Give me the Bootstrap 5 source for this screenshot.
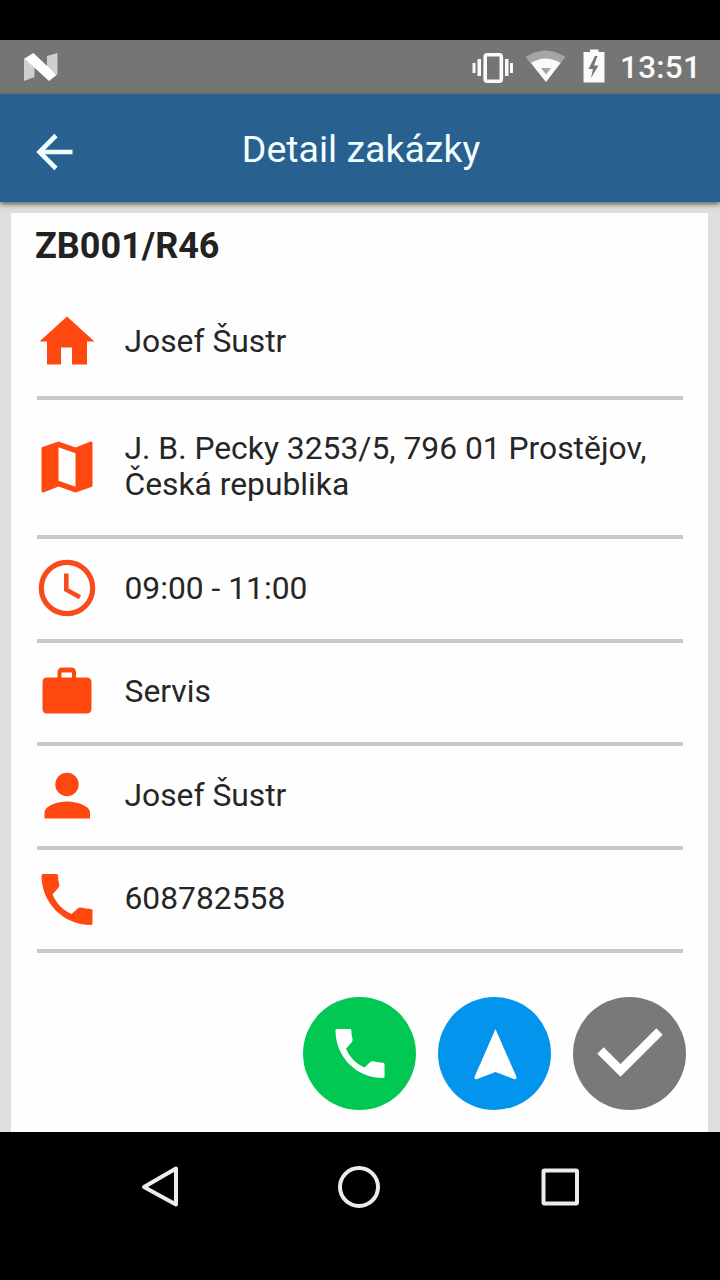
<!DOCTYPE html>
<html lang="cs">
<head>
<meta charset="utf-8">
<meta name="viewport" content="width=device-width, initial-scale=1">
<title>Detail zakázky</title>
<link href="https://cdn.jsdelivr.net/npm/bootstrap@5.3.0/dist/css/bootstrap.min.css" rel="stylesheet">
<style>
body { font-family: Roboto, "Noto Sans", sans-serif; color: #262626; background: #000; overflow: hidden; }
svg { display: block; flex: none; }
.screen { width: 720px; height: 1280px; padding-top: 40px; }
.status-bar { height: 54px; background: #757573; padding: 0 19px 0 20px; }
.status-time { font-size: 31.5px; font-weight: 500; line-height: 52px; padding-top: 2px; color: #fafafa; letter-spacing: .2px; margin-left: 10px; }
.app-bar { height: 108px; background: #28618f; box-shadow: 0 2px 5px rgba(60, 45, 35, .75); z-index: 1; padding: 0 24px; color: #f2ffff; }
.app-title { font-size: 37.5px; font-weight: 400; line-height: 106px; padding-top: 1px; margin: 0; }
.app-bar-end { width: 58px; }
.page-area { background: #dedede; padding: 11px 12px 0 11px; height: 930px; }
.order-card { border: 0; border-radius: 0; height: 919px; background: #fefefe; color: inherit; }
.order-number { font-size: 36px; font-weight: 700; line-height: 40px; margin: 0; padding: 13px 0 21px 24px; color: #222; }
.detail-list { margin: 0 25px 0 26px; border-radius: 0; }
.detail-list > .detail-row { background: none; color: inherit; border: 0 solid #c8c8c8; border-bottom-width: 4px; border-radius: 0; padding: 0 0 2px; height: 103px; font-size: 31.8px; line-height: 36px; }
.detail-list > .detail-row:nth-child(odd) { height: 104px; }
.detail-list > .detail-row:first-child { height: 113px; padding-bottom: 0; }
.detail-list > .detail-row:nth-child(2) { height: 139px; }
.detail-row span { padding-bottom: 1px; }
.detail-icon { width: 68px; height: 68px; margin: 0 24px 0 -4.5px; fill: #ff4810; }
.fab-row { gap: 22px; padding: 44px 22px 0 0; }
.fab { width: 113px; height: 113px; padding: 0; border: 0; }
.fab-call { background: #00c853; }
.fab-navigate { background: #0394ee; }
.fab-done { background: #7a7879; }
.system-nav { height: 110px; padding-left: 135px; gap: 152px; fill: none; stroke: #ececec; stroke-width: 4; }
</style>
</head>
<body>
<svg width="0" height="0" class="position-absolute" aria-hidden="true">
  <symbol id="handset" viewBox="0 0 52 52"><path d="M2 .5h13.500q1.500 0 1.500 1.500 0 5 1.300 9 .4 1.500-.6 2.700l-6.200 7.300c4.500 9.500 9.500 15 19 19.500l6.500-5.800q1.300-1 3-.6 4 1.200 10 1.400 1.500.1 1.500 1.500V50q0 1.500-1.500 1.500C22 51.500.5 29 .5 2Q.5.500 2 .5z"/></symbol>
</svg>
<div class="screen d-flex flex-column">
  <div class="status-bar d-flex align-items-center">
    <svg width="40" height="54" viewBox="20 40 40 54">
      <path fill="#d0cece" d="M24 58v23l10.500-4V66zM47 56l10.500-3v22L47 70z"/>
      <path fill="#fff" d="M24.500 58.500 33.500 53 56.500 75 49 81z"/>
    </svg>
    <svg class="ms-auto" width="140" height="54" viewBox="470 40 140 54">
      <rect x="485.200" y="54.700" width="16.100" height="26.600" rx="2" fill="none" stroke="#fafafa" stroke-width="3.600"/>
      <path fill="#fafafa" d="M477.500 59h3.500v17h-3.500zM472.500 63h3v10h-3zM505 59h3.500v17H505zM510 63h3v10h-3z"/>
      <path fill="#a5a5a4" d="M525.500 57q20-13 40 0L546 82z"/>
      <path fill="#fafafa" fill-rule="evenodd" d="M531 63q14.500-9 29.500 0L546 82zM541 68l5 6.500 5-6.500z"/>
      <path fill="#fafafa" d="M583.500 52h6.500v-2.500h8.500V52h6v30.500h-21z"/>
      <path fill="#757573" d="m595 56-6.500 13h4.500l-2 9 7.500-12.500H594l3.500-9.500z"/>
    </svg>
    <span class="status-time">13:51</span>
  </div>
  <header class="app-bar d-flex align-items-center position-relative">
    <svg width="60" height="60" viewBox="24 118 60 60" fill="none" stroke="#f2ffff" stroke-width="4.600"><path d="M72.500 152H40M56 135.500 39.500 152 56 168.500"/></svg>
    <h1 class="app-title flex-fill text-center">Detail zakázky</h1>
    <span class="app-bar-end"></span>
  </header>
  <main class="page-area">
    <section class="card order-card">
      <h2 class="order-number">ZB001/R46</h2>
      <ul class="list-group detail-list">
        <li class="list-group-item detail-row d-flex align-items-center">
          <svg class="detail-icon" viewBox="0 0 68 68"><path d="M28 56.500V39.500H39V56.500H54V33.500H61.500L34 8.500 6.500 33.500H14V56.500z"/></svg>
          <span>Josef Šustr</span>
        </li>
        <li class="list-group-item detail-row d-flex align-items-center">
          <svg class="detail-icon" viewBox="0 0 24 24"><path d="M20.500 3l-.16.03L15 5.100 9 3 3.360 4.900c-.21.07-.36.25-.36.48V20.500c0 .28.22.5.5.5l.16-.03L9 18.900l6 2.100 5.640-1.900c.21-.07.36-.25.36-.48V3.500c0-.28-.22-.5-.5-.5zM15 19l-6-2.110V5l6 2.110V19z"/></svg>
          <span>J. B. Pecky 3253/5, 796 01 Prostějov,<br>Česká republika</span>
        </li>
        <li class="list-group-item detail-row d-flex align-items-center">
          <svg class="detail-icon" viewBox="0 0 68 68"><g fill="none" stroke="#f84a1c"><circle cx="34" cy="34" r="25.700" stroke-width="5.200"/><path d="M33.300 19.500v16.200L47 43.300" stroke-width="4.600"/></g></svg>
          <span>09:00 - 11:00</span>
        </li>
        <li class="list-group-item detail-row d-flex align-items-center">
          <svg class="detail-icon" viewBox="0 0 68 68"><path fill-rule="evenodd" d="M14 19.500h10.500v-5q0-5 5-5H38q5 0 5 5v5h10.500q5 0 5 5v26q0 5-5 5H14q-4.500 0-4.500-5v-26q0-5 4.500-5zm14.500 0H39v-5H28.500z"/></svg>
          <span>Servis</span>
        </li>
        <li class="list-group-item detail-row d-flex align-items-center">
          <svg class="detail-icon" viewBox="0 0 68 68"><circle cx="34" cy="23.500" r="11.700"/><path d="M11.500 57.500v-6C12 44 26 40.500 34 40.500S56.500 44 57 51.500v6z"/></svg>
          <span>Josef Šustr</span>
        </li>
        <li class="list-group-item detail-row d-flex align-items-center">
          <svg class="detail-icon" viewBox="0 0 68 68"><use href="#handset" x="8" y="8.500" width="52" height="52"/></svg>
          <span>608782558</span>
        </li>
      </ul>
      <div class="fab-row d-flex justify-content-end">
        <button class="btn fab fab-call rounded-circle" aria-label="Zavolat"><svg width="113" height="113" fill="#fff"><use href="#handset" x="32" y="31.500" width="50" height="50"/></svg></button>
        <button class="btn fab fab-navigate rounded-circle" aria-label="Navigovat"><svg width="113" height="113" fill="#fff"><path d="M57.500 32 78.500 80q.5 2.500-2 2.200L57.500 75 38.500 82.200q-2.500.3-2-2.200z"/></svg></button>
        <button class="btn fab fab-done rounded-circle" aria-label="Hotovo"><svg width="113" height="113" fill="none" stroke="#fff" stroke-width="9"><path d="M27.500 53.500 47.500 73.500 86.500 34.500"/></svg></button>
      </div>
    </section>
  </main>
  <nav class="system-nav d-flex">
    <svg width="48" height="110" viewBox="135 1132 48 110"><path stroke-linejoin="round" d="M144 1187 176 1168.500v36z"/></svg>
    <svg width="48" height="110" viewBox="335 1132 48 110"><circle cx="359" cy="1187" r="19"/></svg>
    <svg width="48" height="110" viewBox="535 1132 48 110"><rect x="543.500" y="1170.500" width="33.500" height="33" rx="1"/></svg>
  </nav>
</div>
<script src="https://cdn.jsdelivr.net/npm/bootstrap@5.3.0/dist/js/bootstrap.bundle.min.js"></script>
</body>
</html>
